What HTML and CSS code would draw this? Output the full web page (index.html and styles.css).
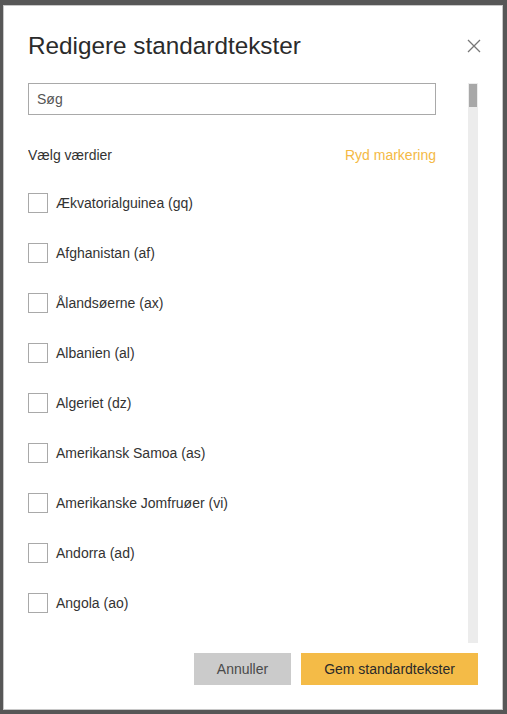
FILE: index.html
```html
<!DOCTYPE html>
<html lang="da">
<head>
<meta charset="utf-8">
<title>Redigere standardtekster</title>
<link rel="stylesheet" href="styles.css">
</head>
<body>
<div class="backdrop">
  <div class="dialog">
    <div class="header">
      <h1 class="title">Redigere standardtekster</h1>
      <button class="close" aria-label="Luk">
        <svg width="14" height="14" viewBox="0 0 14 14"><path d="M1 1L13 13M13 1L1 13" stroke="#777" stroke-width="1.3" fill="none"/></svg>
      </button>
    </div>
    <div class="body">
      <div class="content">
        <input class="search" type="text" placeholder="Søg">
        <div class="list-head">
          <span class="label">Vælg værdier</span>
          <span class="clear">Ryd markering</span>
        </div>
        <ul class="list">
          <li class="row"><span class="box"></span><span>Ækvatorialguinea (gq)</span></li>
          <li class="row"><span class="box"></span><span>Afghanistan (af)</span></li>
          <li class="row"><span class="box"></span><span>Ålandsøerne (ax)</span></li>
          <li class="row"><span class="box"></span><span>Albanien (al)</span></li>
          <li class="row"><span class="box"></span><span>Algeriet (dz)</span></li>
          <li class="row"><span class="box"></span><span>Amerikansk Samoa (as)</span></li>
          <li class="row"><span class="box"></span><span>Amerikanske Jomfruøer (vi)</span></li>
          <li class="row"><span class="box"></span><span>Andorra (ad)</span></li>
          <li class="row"><span class="box"></span><span>Angola (ao)</span></li>
        </ul>
      </div>
      <div class="scrollbar"><div class="thumb"></div></div>
    </div>
    <div class="footer">
      <button class="btn btn-cancel">Annuller</button>
      <button class="btn btn-save">Gem standardtekster</button>
    </div>
  </div>
</div>
</body>
</html>
```
FILE: styles.css
```css
* { box-sizing: border-box; }
html, body { margin: 0; padding: 0; }
body {
  background: #575757;
  font-family: "Liberation Sans", Arial, sans-serif;
  color: #333;
  width: 507px;
  height: 714px;
  overflow: hidden;
}
.backdrop {
  padding: 5px 4px 4px 3px;
}
.dialog {
  width: 500px;
  height: 705px;
  background: #fff;
  border: 1px solid #c8c8c8;
  padding: 24px 24px 24px 24px;
  display: flex;
  flex-direction: column;
}
.header {
  display: flex;
  align-items: center;
  justify-content: space-between;
  height: 32px;
  margin-bottom: 21px;
}
.title {
  margin: 0;
  font-size: 24.3px;
  font-weight: 400;
  color: #2b2b2b;
  line-height: 32px;
}
.close {
  border: 0;
  background: none;
  padding: 0;
  width: 14px;
  height: 14px;
  margin-right: -3px;
  display: flex;
}
.body {
  display: flex;
  height: 560px;
  gap: 32px;
}
.content {
  flex: 1;
  overflow: hidden;
}
.search {
  display: block;
  width: 100%;
  height: 32px;
  border: 1px solid #a9a9a9;
  padding: 0 8px;
  font-family: inherit;
  font-size: 14px;
  color: #333;
  outline: none;
}
.search::placeholder { color: #555; }
.list-head {
  display: flex;
  justify-content: space-between;
  align-items: center;
  height: 20px;
  margin-top: 30px;
  margin-bottom: 13px;
  font-size: 14px;
  line-height: 20px;
}
.label { color: #333; }
.clear { color: #f4b944; }
.list {
  list-style: none;
  margin: 0;
  padding: 0;
}
.row {
  display: flex;
  align-items: center;
  height: 50px;
  gap: 8px;
  font-size: 14px;
  color: #333;
}
.box {
  width: 20px;
  height: 20px;
  border: 1px solid #a9a9a9;
  background: #fff;
  flex: none;
}
.scrollbar {
  width: 10px;
  background: #ececec;
  padding: 1px;
}
.thumb {
  height: 23px;
  background: #a8a8a8;
}
.footer {
  display: flex;
  justify-content: flex-end;
  gap: 10px;
  margin-top: 10px;
}
.btn {
  height: 32px;
  border: 0;
  font-family: inherit;
  font-size: 14px;
  padding: 0;
}
.btn-cancel {
  width: 97px;
  background: #cbcbcb;
  color: #4a4a4a;
}
.btn-save {
  width: 177px;
  background: #f4bb47;
  color: #2a2a2a;
}
```
